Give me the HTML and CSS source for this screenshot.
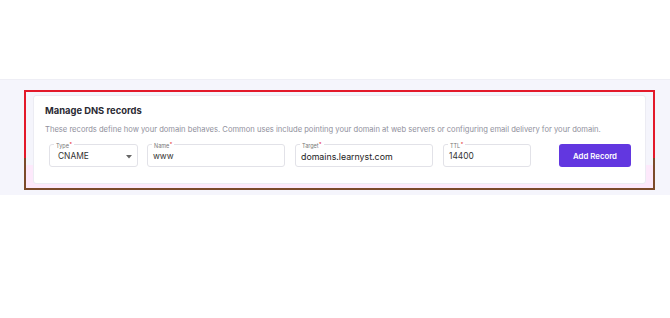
FILE: index.html
```html
<!DOCTYPE html>
<html>
<head>
<meta charset="utf-8">
<link rel="stylesheet" href="styles.css">
</head>
<body>
<div class="top"></div>
<div class="band">
  <div class="frame">
    <div class="card">
      <h2 class="title">Manage DNS records</h2>
      <p class="desc">These records define how your domain behaves. Common uses include pointing your domain at web servers or configuring email delivery for your domain.</p>
      <div class="row">
        <div class="field f-type">
          <span class="label">Type<i>*</i></span>
          <span class="value">CNAME</span>
          <svg class="caret" width="6" height="4" viewBox="0 0 6 4"><path d="M0 0h6L3 3.5z" fill="#666"/></svg>
        </div>
        <div class="field f-name">
          <span class="label">Name<i>*</i></span>
          <span class="value">www</span>
        </div>
        <div class="field f-target">
          <span class="label">Target<i>*</i></span>
          <span class="value big">domains.learnyst.com</span>
        </div>
        <div class="field f-ttl">
          <span class="label">TTL<i>*</i></span>
          <span class="value">14400</span>
        </div>
        <button class="btn">Add Record</button>
      </div>
    </div>
  </div>
</div>
</body>
</html>
```
FILE: styles.css
```css
* { box-sizing: border-box; }
html, body { margin: 0; padding: 0; background: #fff; }
body { font-family: Inter, "Noto Sans", sans-serif; width: 670px; height: 318px; overflow: hidden; }
.top { height: 79px; }
.band {
  background: #f5f5fc;
  height: 116px;
  padding-top: 10px;
  border-top: 1px solid #eeeef5;
}
.frame {
  margin-left: 24px;
  width: 631px;
  height: 100px;
  border: 2px solid #e3192a;
  border-image: linear-gradient(to bottom, #e3192a 0, #e3192a 68%, #7c4a2a 68%, #7c4a2a 100%) 1;
  padding: 3px 7px 4px 7px;
  background: linear-gradient(to bottom, #f5f5fc 0, #f5f5fc 76%, #fde9fb 76%, #fde9fb 100%);
}
.card {
  background: #fff;
  border: 1px solid #ececf3;
  border-radius: 3px;
  height: 89px;
  padding: 8px 12px 0 11px;
}
.title {
  margin: 0;
  font-size: 9.4px;
  line-height: 14px;
  font-weight: 700;
  color: #2a2a33;
}
.desc {
  margin: 6px 0 0 0;
  font-size: 7.6px;
  line-height: 12px;
  color: #90909c;
  white-space: nowrap;
}
.row {
  display: flex;
  align-items: flex-start;
  margin-top: 8px;
  padding-left: 4px;
}
.field {
  position: relative;
  height: 23px;
  border: 1px solid #e2e2e8;
  border-radius: 3px;
  display: flex;
  align-items: center;
  padding-left: 7px;
  flex: none;
}
.f-type { width: 89px; margin-right: 9px; padding-left: 8px; }
.f-name { width: 138px; margin-right: 10px; padding-left: 5px; }
.f-target { width: 138px; margin-right: 10px; padding-left: 5px; }
.f-ttl { width: 88px; margin-right: 28px; padding-left: 5px; }
.label {
  position: absolute;
  top: -4px;
  left: 4px;
  padding: 0 2px;
  background: #fff;
  font-size: 5.5px;
  line-height: 6px;
  color: #777;
}
.label i { font-style: normal; color: #e3192a; font-size: 5px; vertical-align: 2px; margin-left: 0.5px; }
.value { font-size: 8.4px; color: #333; margin-top: 1px; }
.value.big { font-size: 8.8px; color: #222; }
.caret { position: absolute; right: 5px; top: 10px; }
.btn {
  flex: none;
  width: 72px;
  height: 23px;
  border: 0;
  border-radius: 3px;
  background: #6237e0;
  color: #fff;
  font-family: Inter, "Noto Sans", sans-serif;
  font-size: 7.8px;
  font-weight: 600;
  padding: 0;
}
```
